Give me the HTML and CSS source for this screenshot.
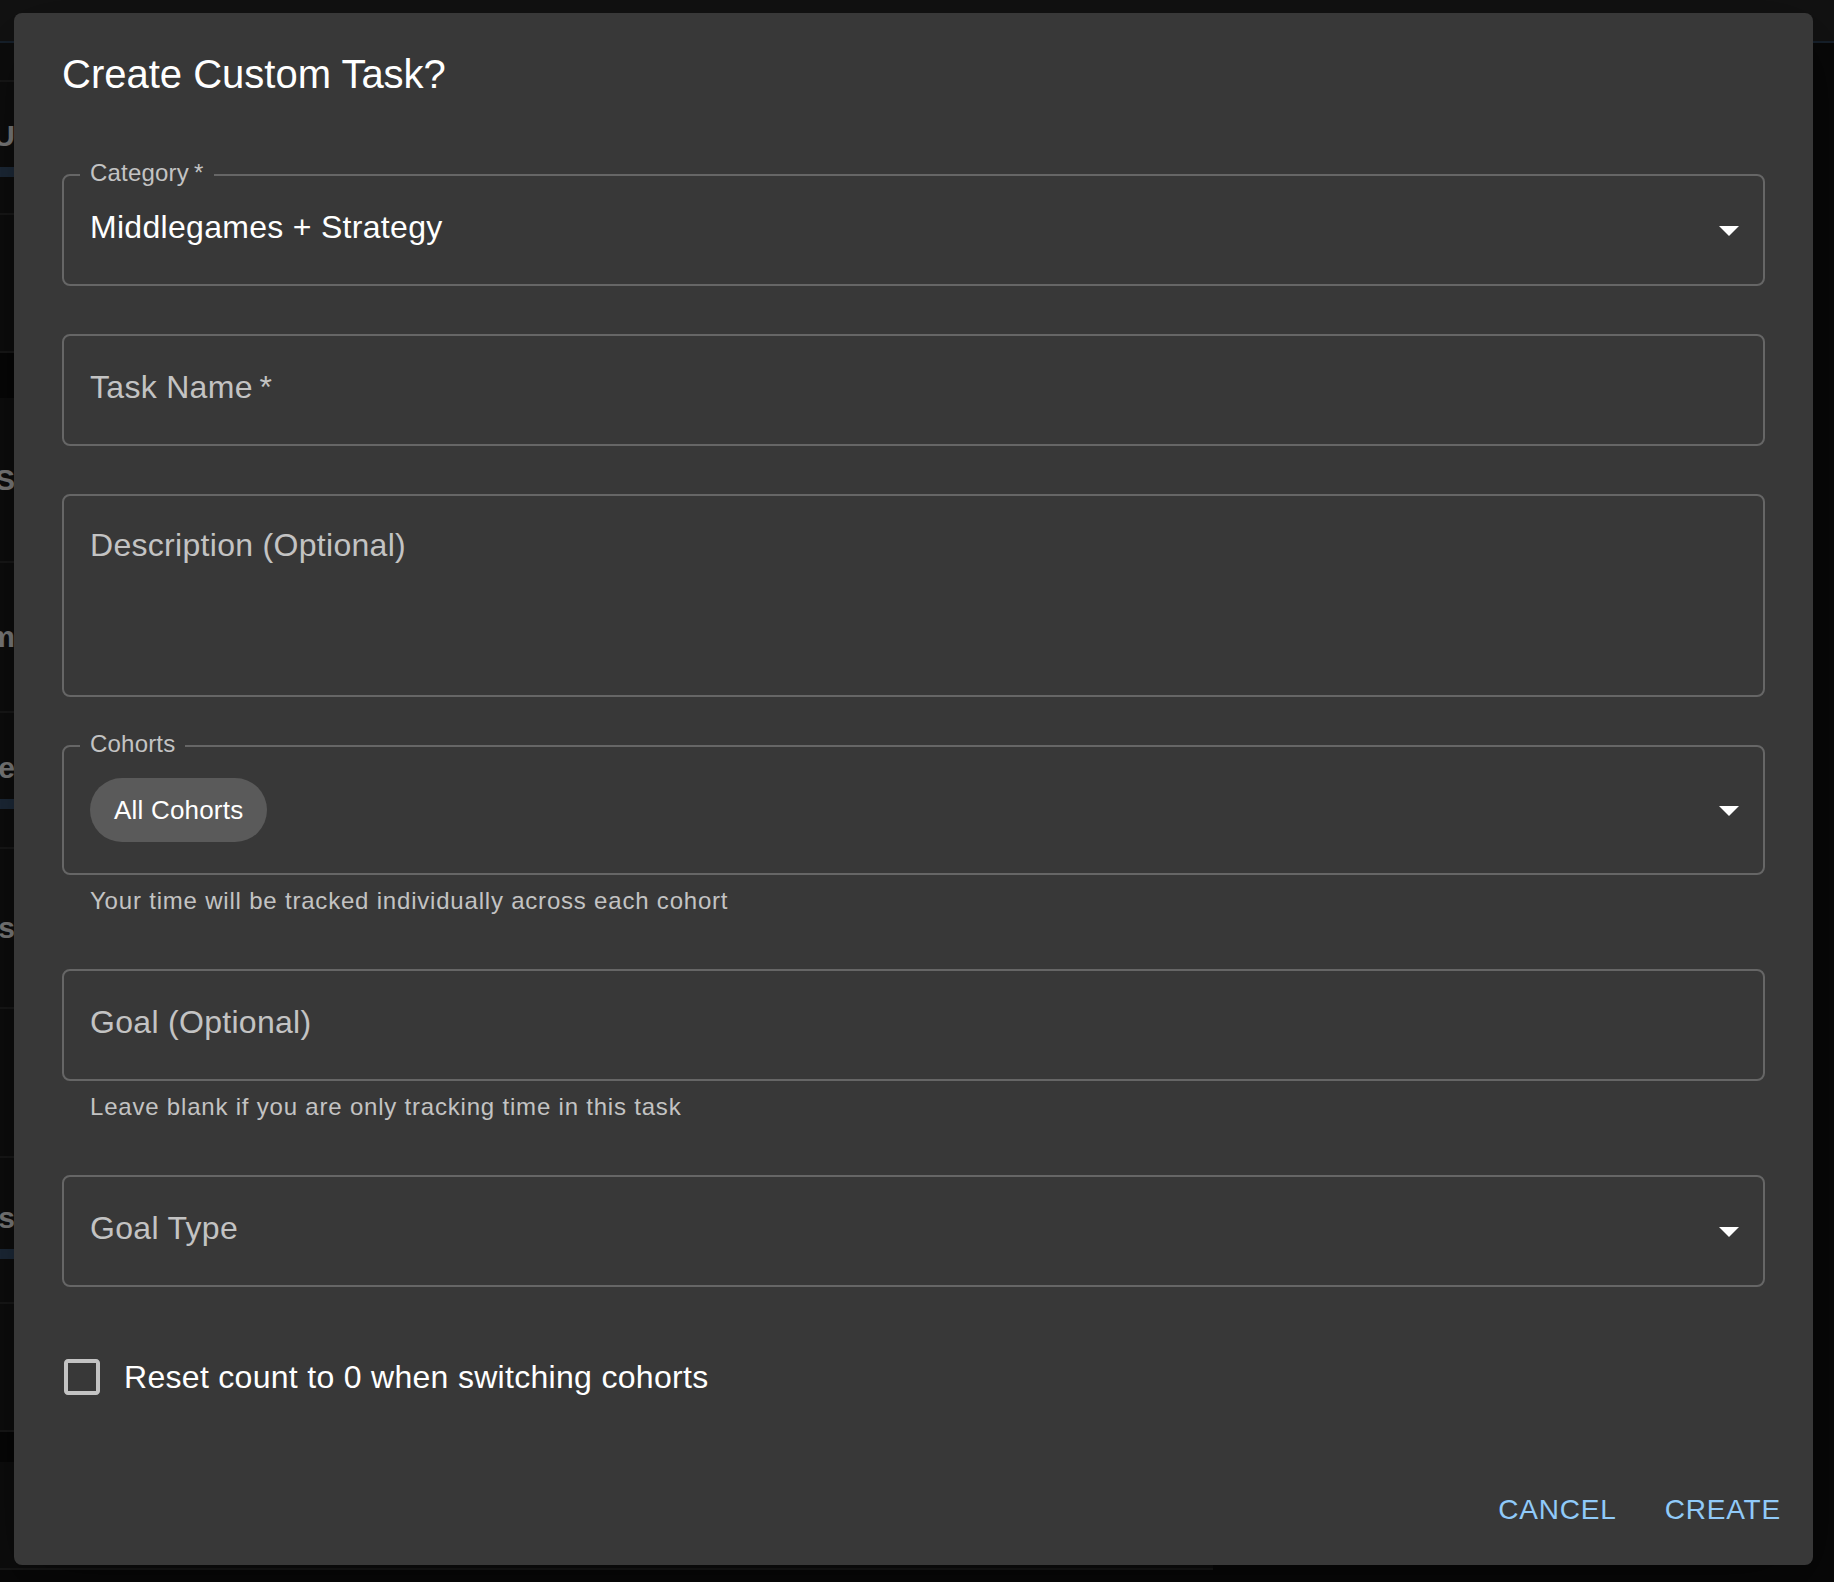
FILE: index.html
```html
<!DOCTYPE html>
<html lang="en">
<head>
<meta charset="utf-8">
<title>Create Custom Task</title>
<link rel="stylesheet" href="styles.css">
</head>
<body>
<div class="page">
  <div class="topbar"></div>
  <div class="rows">
    <div class="row row-0"></div>
    <div class="row row-1"><div class="frag-box"><span class="frag">U</span></div><div class="bar"></div></div>
    <div class="row row-2"></div>
    <div class="section"></div>
    <div class="row row-3"><div class="frag-box"><span class="frag">S</span></div></div>
    <div class="row row-4"><div class="frag-box"><span class="frag">m</span></div></div>
    <div class="row row-5"><div class="frag-box"><span class="frag">ve</span></div><div class="bar"></div></div>
    <div class="row row-6"><div class="frag-box"><span class="frag">os</span></div></div>
    <div class="row row-7"></div>
    <div class="row row-8"><div class="frag-box"><span class="frag">s</span></div><div class="bar"></div></div>
    <div class="row row-9"></div>
    <div class="section section-b"></div>
    <div class="row row-10"></div>
  </div>
</div>
<div class="backdrop"></div>
<div class="dialog" role="dialog" aria-labelledby="dlg-title">
  <h2 class="dialog-title" id="dlg-title">Create Custom Task?</h2>
  <div class="dialog-content">
    <div class="form">
      <div class="control">
        <div class="field field-std">
          <span class="field-label">Category&thinsp;*</span>
          <span class="field-value">Middlegames + Strategy</span>
          <svg class="arrow" viewBox="0 0 24 24"><path d="M7 10l5 5 5-5z"/></svg>
        </div>
      </div>
      <div class="control">
        <div class="field field-std">
          <span class="field-placeholder">Task Name&thinsp;*</span>
        </div>
      </div>
      <div class="control">
        <div class="field field-multi">
          <span class="field-placeholder">Description (Optional)</span>
        </div>
      </div>
      <div class="control">
        <div class="field field-chips">
          <span class="field-label">Cohorts</span>
          <span class="chip">All Cohorts</span>
          <svg class="arrow" viewBox="0 0 24 24"><path d="M7 10l5 5 5-5z"/></svg>
        </div>
        <p class="helper">Your time will be tracked individually across each cohort</p>
      </div>
      <div class="control">
        <div class="field field-std">
          <span class="field-placeholder">Goal (Optional)</span>
        </div>
        <p class="helper">Leave blank if you are only tracking time in this task</p>
      </div>
      <div class="control">
        <div class="field field-std">
          <span class="field-placeholder">Goal Type</span>
          <svg class="arrow" viewBox="0 0 24 24"><path d="M7 10l5 5 5-5z"/></svg>
        </div>
      </div>
      <label class="check-row">
        <span class="check">
          <svg viewBox="0 0 24 24"><path d="M19 5v14H5V5h14m0-2H5c-1.1 0-2 .9-2 2v14c0 1.1.9 2 2 2h14c1.1 0 2-.9 2-2V5c0-1.1-.9-2-2-2z"/></svg>
        </span>
        <span class="check-label">Reset count to 0 when switching cohorts</span>
      </label>
    </div>
  </div>
  <div class="dialog-actions">
    <button class="btn" type="button">Cancel</button>
    <button class="btn" type="button">Create</button>
  </div>
</div>
</body>
</html>
```
FILE: styles.css
```css
* { box-sizing: border-box; }
html, body { margin: 0; padding: 0; }
body {
  background: #101010;
  font-family: "Liberation Sans", Arial, Helvetica, sans-serif;
  width: 1834px;
  height: 1582px;
  overflow: hidden;
  position: relative;
}

/* underlying page (dimmed by backdrop) */
.page { width: 1834px; }
.topbar { height: 43px; background: #242424; border-bottom: 2px solid #2e4258; }
.rows {
  display: flex;
  flex-direction: column;
  width: 1213px;
  background: #1a1a1a;
}
.row {
  border-bottom: 2px solid #303030;
  display: flex;
  flex-direction: column;
  justify-content: center;
  gap: 14px;
}
.frag-box {
  width: 15px;
  overflow: hidden;
  display: flex;
  justify-content: flex-end;
  color: #ffffff;
  font-size: 30px;
  line-height: 34px;
  font-weight: 700;
}
.frag { white-space: nowrap; }
.bar { height: 10px; width: 40px; background: #3a5472; }
.section { height: 45px; background: #0c0c0c; }
.section-b { height: 30px; }
.row-0 { height: 39px; }
.row-1 { height: 133px; }
.row-2 { height: 138px; }
.row-3 { height: 165px; }
.row-4 { height: 150px; }
.row-5 { height: 136px; }
.row-6 { height: 160px; }
.row-7 { height: 149px; }
.row-8 { height: 146px; }
.row-9 { height: 128px; }
.row-10 { height: 108px; }

.backdrop {
  position: absolute;
  inset: 0;
  background: rgba(0, 0, 0, 0.5);
}

/* dialog */
.dialog {
  position: absolute;
  left: 14px;
  top: 13px;
  width: 1799px;
  background: #383838;
  border-radius: 8px;
  color: #fff;
  display: flex;
  flex-direction: column;
  box-shadow: 0 22px 70px rgba(0,0,0,0.4);
}
.dialog-title {
  margin: 0;
  padding: 29px 48px 35px;
  font-size: 40px;
  line-height: 64px;
  font-weight: 400;
}
.dialog-content {
  padding: 33px 48px 38px;
}
.form {
  display: flex;
  flex-direction: column;
  gap: 48px;
}
.control { display: flex; flex-direction: column; }

.field {
  position: relative;
  border: 2px solid #666666;
  border-radius: 8px;
  display: flex;
  align-items: center;
  padding: 0 26px;
}
.field-std { height: 112px; padding-bottom: 6px; }
.field-multi { height: 203px; align-items: flex-start; padding-top: 26px; }
.field-chips { height: 130px; }

.field-label {
  position: absolute;
  left: 16px;
  top: -15px;
  padding: 0 10px;
  background: #383838;
  color: #c3c3c3;
  font-size: 24px;
  line-height: 24px;
  letter-spacing: 0.2px;
}
.field-value {
  font-size: 32px;
  letter-spacing: 0.3px;
  color: #fff;
}
.field-placeholder {
  font-size: 32px;
  line-height: 46px;
  letter-spacing: 0.3px;
  color: #c3c3c3;
}
.arrow {
  position: absolute;
  right: 10px;
  top: 50%;
  width: 48px;
  height: 48px;
  margin-top: -24px;
  fill: #fff;
}
.chip {
  display: inline-flex;
  align-items: center;
  height: 64px;
  padding: 0 24px;
  border-radius: 32px;
  background: #5a5a5a;
  color: #fff;
  font-size: 26px;
  letter-spacing: 0.2px;
}
.helper {
  margin: 6px 28px 0;
  font-size: 24px;
  line-height: 40px;
  letter-spacing: 0.8px;
  color: #c3c3c3;
}

.check-row {
  display: flex;
  align-items: center;
  height: 84px;
  margin-left: -22px;
}
.check {
  padding: 18px;
  display: flex;
}
.check svg {
  width: 48px;
  height: 48px;
  fill: #c3c3c3;
}
.check-label {
  font-size: 32px;
  letter-spacing: 0.3px;
  color: #fff;
}

.dialog-actions {
  display: flex;
  justify-content: flex-end;
  gap: 16px;
  padding: 16px 16px 19px;
}
.btn {
  background: none;
  border: 0;
  font-family: inherit;
  font-size: 28px;
  line-height: 49px;
  letter-spacing: 0.8px;
  text-transform: uppercase;
  color: #90caf9;
  padding: 12px 16px;
  min-width: 128px;
  cursor: pointer;
}
```
